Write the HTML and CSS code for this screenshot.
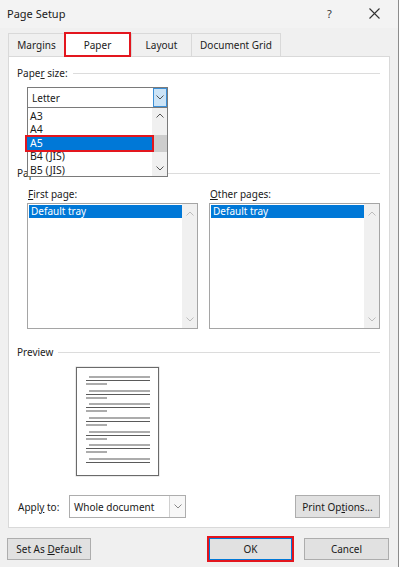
FILE: index.html
```html
<!DOCTYPE html>
<html lang="en">
<head>
    <meta charset="UTF-8">
    <meta name="viewport" content="width=device-width, initial-scale=1.0">
    <title>Page Setup</title>
    <link rel="stylesheet" href="styles.css">
</head>
<body>
    <div class="dialog">
        <!-- Title bar -->
        <div class="titlebar">
            <span class="title">Page Setup</span>
            <span class="help">?</span>
            <svg class="close" width="11" height="11" viewBox="0 0 11 11">
                <path d="M0.5 0.5 L10.5 10.5 M10.5 0.5 L0.5 10.5" stroke="#333" stroke-width="1.1" fill="none"/>
            </svg>
        </div>

        <!-- Tabs -->
        <div class="tabs">
            <div class="tab tab-margins">Margins</div>
            <div class="tab tab-paper active">Paper</div>
            <div class="tab tab-layout">Layout</div>
            <div class="tab tab-grid">Document Grid</div>
        </div>

        <!-- Tab panel -->
        <div class="panel">
            <div class="group-head"><span>Pape<u>r</u> size:</span></div>

            <div class="combo-wrap">
                <div class="combo combo-open">
                    <span class="combo-text">Letter</span>
                    <span class="combo-btn">
                        <svg width="8" height="5" viewBox="0 0 8 5"><path d="M0.5 0.5 L4 4 L7.5 0.5" stroke="#555" fill="none"/></svg>
                    </span>
                </div>
                <div class="droplist">
                    <div class="drop-items">
                        <div class="drop-item">A3</div>
                        <div class="drop-item">A4</div>
                        <div class="drop-item selected">A5</div>
                        <div class="drop-item">B4 (JIS)</div>
                        <div class="drop-item">B5 (JIS)</div>
                    </div>
                    <div class="drop-scroll">
                        <svg class="arrow" width="8" height="5" viewBox="0 0 8 5"><path d="M0.5 4.5 L4 1 L7.5 4.5" stroke="#555" fill="none"/></svg>
                        <div class="thumb"></div>
                        <svg class="arrow" width="8" height="5" viewBox="0 0 8 5"><path d="M0.5 0.5 L4 4 L7.5 0.5" stroke="#555" fill="none"/></svg>
                    </div>
                </div>
            </div>

            <div class="group-head source-head"><span>Paper source</span></div>

            <div class="sources">
                <div class="source">
                    <div class="source-label"><u>F</u>irst page:</div>
                    <div class="listbox">
                        <div class="list-items">
                            <div class="list-item selected">Default tray</div>
                        </div>
                        <div class="list-scroll">
                            <svg width="8" height="5" viewBox="0 0 8 5"><path d="M0.5 4.5 L4 1 L7.5 4.5" stroke="#bcbcbc" fill="none"/></svg>
                            <svg width="8" height="5" viewBox="0 0 8 5"><path d="M0.5 0.5 L4 4 L7.5 0.5" stroke="#bcbcbc" fill="none"/></svg>
                        </div>
                    </div>
                </div>
                <div class="source">
                    <div class="source-label"><u>O</u>ther pages:</div>
                    <div class="listbox">
                        <div class="list-items">
                            <div class="list-item selected">Default tray</div>
                        </div>
                        <div class="list-scroll">
                            <svg width="8" height="5" viewBox="0 0 8 5"><path d="M0.5 4.5 L4 1 L7.5 4.5" stroke="#bcbcbc" fill="none"/></svg>
                            <svg width="8" height="5" viewBox="0 0 8 5"><path d="M0.5 0.5 L4 4 L7.5 0.5" stroke="#bcbcbc" fill="none"/></svg>
                        </div>
                    </div>
                </div>
            </div>

            <div class="group-head preview-head"><span>Preview</span></div>

            <div class="preview">
                <svg width="85" height="111" viewBox="0 0 85 111">
                    <rect x="0.5" y="0.5" width="84" height="110" fill="#d8d8d8"/>
                    <rect x="1.5" y="1.5" width="82" height="108" fill="#fff" stroke="#6a6a6a"/>
                    <g stroke="#5a5a5a" stroke-width="1.2">
                        <path d="M14 11 H75 M11 14.5 H75 M11 18 H32"/>
                        <path d="M14 25 H75 M11 28.5 H75 M11 32 H32"/>
                        <path d="M14 38 H75 M11 41.5 H75 M11 45 H32"/>
                        <path d="M14 52 H75 M11 55.5 H75 M11 59 H32"/>
                        <path d="M14 66 H75 M11 69.5 H75 M11 73 H32"/>
                        <path d="M14 79 H75 M11 82.5 H75 M11 86 H32"/>
                        <path d="M14 93 H75 M11 96.5 H75"/>
                    </g>
                </svg>
            </div>

            <div class="apply-row">
                <span class="apply-label">Appl<u>y</u> to:</span>
                <div class="combo combo-apply">
                    <span class="combo-text">Whole document</span>
                    <span class="combo-btn">
                        <svg width="8" height="5" viewBox="0 0 8 5"><path d="M0.5 0.5 L4 4 L7.5 0.5" stroke="#888" fill="none"/></svg>
                    </span>
                </div>
                <div class="spacer"></div>
                <button class="btn btn-options">Print Op<u>t</u>ions...</button>
            </div>
        </div>

        <!-- Bottom buttons -->
        <div class="footer">
            <button class="btn btn-default">Set As <u>D</u>efault</button>
            <div class="spacer"></div>
            <button class="btn btn-ok">OK</button>
            <button class="btn btn-cancel">Cancel</button>
        </div>
    </div>
</body>
</html>
```

FILE: styles.css
```css
/* Page Setup dialog */
body {
    margin: 0;
    font-family: "Noto Sans", "Liberation Sans", sans-serif;
    font-size: 9.5px;
    color: #1a1a1a;
    background: #f0f0f0;
}

u {
    text-decoration-thickness: 1px;
    text-underline-offset: 1px;
}

.dialog {
    width: 399px;
    height: 567px;
    box-sizing: border-box;
    border-right: 1px solid #8c8c8c;
    background: #f0f0f0;
    display: flex;
    flex-direction: column;
}

.titlebar {
    height: 28px;
    display: flex;
    align-items: center;
    padding-left: 7px;
    background: #f3f3f3;
}

.title {
    font-size: 11px;
    flex: 1;
    margin-top: -2px;
}

.help {
    font-size: 11px;
    width: 10px;
    margin-right: 32px;
    margin-top: -2px;
    color: #333;
}

.close {
    margin-right: 18px;
    margin-top: -2px;
}

/* Tabs */
.tabs {
    display: flex;
    align-items: flex-end;
    height: 28px;
    padding-left: 8px;
}

.tab {
    height: 23px;
    box-sizing: border-box;
    border: 1px solid #d9d9d9;
    border-bottom: none;
    border-right: none;
    display: flex;
    align-items: center;
    justify-content: center;
    font-size: 10px;
    color: #222;
}

.tab-margins { width: 56px; }
.tab-layout { width: 60px; }
.tab-grid { width: 90px; border-right: 1px solid #d9d9d9; }

.tab.active {
    width: 67px;
    height: 25px;
    background: #fff;
    border: 2px solid #e3161e;
    margin-bottom: -1px;
    position: relative;
    z-index: 1;
}

/* Panel */
.panel {
    margin: 0 8px 0 8px;
    height: 472px;
    box-sizing: border-box;
    background: #fff;
    border: 1px solid #d9d9d9;
    padding: 10px 9px 0 8px;
    display: flex;
    flex-direction: column;
}

.group-head {
    display: flex;
    align-items: center;
    height: 12px;
    font-size: 10px;
    color: #222;
}

.group-head::after {
    content: "";
    flex: 1;
    height: 1px;
    background: #dcdcdc;
    margin-left: 5px;
}

.source-head {
    margin-top: 59px;
}

.preview-head {
    margin-top: 17px;
}

/* Combo boxes */
.combo-wrap {
    position: relative;
    margin: 8px 0 0 10px;
    width: 141px;
}

.combo {
    display: flex;
    align-items: center;
    box-sizing: border-box;
    background: #fff;
    border: 1px solid #7a7a7a;
}

.combo-open {
    height: 21px;
}

.combo-text {
    flex: 1;
    padding-left: 4px;
    font-size: 10px;
}

.combo-open .combo-btn {
    width: 14px;
    height: 19px;
    box-sizing: border-box;
    background: #cce4f7;
    border: 1px solid #3c8fd6;
    display: flex;
    align-items: center;
    justify-content: center;
}

.droplist {
    position: absolute;
    top: 21px;
    left: 0;
    width: 141px;
    height: 69px;
    box-sizing: border-box;
    border: 1px solid #7a7a7a;
    border-top: none;
    background: #fff;
    display: flex;
    z-index: 2;
}

.drop-items {
    flex: 1;
    padding-top: 2px;
}

.drop-item {
    height: 13.4px;
    line-height: 13.4px;
    padding-left: 2px;
    font-size: 10.5px;
}

.drop-item.selected {
    background: #0078d7;
    color: #fff;
    outline: 2px solid #e3161e;
    outline-offset: 0;
    position: relative;
    margin-left: -1px;
    padding-left: 3px;
}

.drop-scroll {
    width: 15px;
    background: #f0f0f0;
    display: flex;
    flex-direction: column;
    align-items: center;
}

.drop-scroll .arrow {
    margin: 5px 0;
}

.drop-scroll .thumb {
    width: 15px;
    height: 17px;
    margin-top: 12px;
    margin-bottom: auto;
    background: #cdcdcd;
}

/* Paper source lists */
.sources {
    display: flex;
    gap: 11px;
    margin: 9px 0 0 10px;
}

.source {
    width: 171px;
}

.source-label {
    height: 12px;
    line-height: 12px;
    font-size: 10px;
    margin-left: 1px;
}

.listbox {
    margin-top: 3px;
    height: 126px;
    box-sizing: border-box;
    border: 1px solid #a5a5a5;
    display: flex;
    background: #fff;
}

.list-items {
    flex: 1;
    padding: 1px 0 0 1px;
}

.list-item {
    height: 13px;
    line-height: 13px;
    padding-left: 2px;
    font-size: 10px;
}

.list-item.selected {
    background: #0078d7;
    color: #fff;
}

.list-scroll {
    width: 15px;
    background: #f0f0f0;
    display: flex;
    flex-direction: column;
    justify-content: space-between;
    align-items: center;
    padding: 7px 0 6px;
}

/* Preview */
.preview {
    margin: 8px 0 0 58px;
    height: 111px;
}

.preview svg {
    display: block;
}

/* Apply row */
.apply-row {
    display: flex;
    align-items: center;
    margin-top: 18px;
    height: 23px;
}

.apply-label {
    font-size: 10px;
    width: 51px;
    margin-left: 1px;
}

.combo-apply {
    width: 117px;
    height: 23px;
    border-color: #adadad;
}

.combo-apply .combo-btn {
    width: 15px;
    height: 21px;
    border-left: 1px solid #d0d0d0;
    background: #f7f7f7;
    display: flex;
    align-items: center;
    justify-content: center;
}

.spacer {
    flex: 1;
}

/* Buttons */
.btn {
    font-family: inherit;
    font-size: 10px;
    color: #1a1a1a;
    background: #e1e1e1;
    border: 1px solid #adadad;
    padding: 0;
    height: 22px;
}

.btn-options {
    width: 85px;
    height: 23px;
}

.footer {
    display: flex;
    align-items: center;
    padding: 10px 9px 0 7px;
}

.btn-default {
    width: 84px;
}

.btn-ok {
    width: 83px;
    border-color: #0078d7;
    outline: 2px solid #e3161e;
    outline-offset: 0;
}

.btn-cancel {
    width: 85px;
    margin-left: 12px;
}
```
